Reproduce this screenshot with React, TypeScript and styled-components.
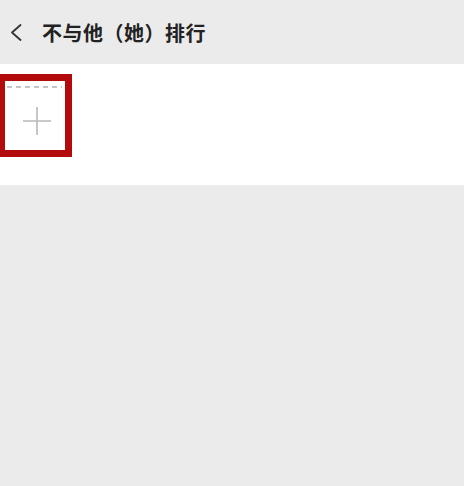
import React from "react";
import styled, { createGlobalStyle } from "styled-components";

const Global = createGlobalStyle`
  html, body { margin: 0; padding: 0; background: #ebebeb; }
  body { font-family: "Noto Sans CJK SC", "Noto Sans", sans-serif; }
`;

const Page = styled.div`
  width: 464px;
  min-height: 486px;
  background: #ebebeb;
  display: flex;
  flex-direction: column;
`;

const Header = styled.header`
  height: 64px;
  display: flex;
  align-items: center;
  padding-left: 9px;
  box-sizing: border-box;
`;

const BackButton = styled.button`
  border: none;
  background: none;
  padding: 0;
  width: 13px;
  height: 18px;
  display: flex;
  align-items: center;
  justify-content: center;
  margin-right: 20px;
  margin-top: 1px;
  cursor: pointer;
`;

const Title = styled.h1`
  margin: 0;
  font-size: 20px;
  line-height: 24px;
  font-weight: 700;
  color: #222;
  letter-spacing: 0.5px;
  font-family: "Noto Sans CJK SC", sans-serif;
  margin-top: 2px;
`;

const Section = styled.section`
  background: #ffffff;
  height: 121px;
  padding-top: 10px;
  box-sizing: border-box;
`;

const Tile = styled.div`
  width: 72px;
  height: 83px;
  box-sizing: border-box;
  border-style: solid;
  border-color: #b30b0b;
  border-width: 7px 7px 7px 5px;
  background: #fff;
  display: flex;
  flex-direction: column;
`;

const DashLine = styled.div`
  margin: 5px 3px 0 2px;
  height: 1.5px;
  background-image: linear-gradient(to right, #c4c4c4 0 5px, transparent 5px 9px);
  background-size: 9px 1.5px;
  background-repeat: repeat-x;
`;

const PlusArea = styled.div`
  flex: 1;
  display: flex;
  align-items: center;
  justify-content: center;
  padding: 5px 0 0 4px;
`;

export default function App() {
  return (
    <>
      <Global />
      <Page>
        <Header>
          <BackButton aria-label="返回">
            <svg width="12" height="17" viewBox="0 0 12 17">
              <path d="M10.5 1 L2 8.5 L10.5 16" fill="none" stroke="#333" strokeWidth="1.8" strokeLinecap="round" strokeLinejoin="round" />
            </svg>
          </BackButton>
          <Title>不与他（她）排行</Title>
        </Header>
        <Section>
          <Tile>
            <DashLine />
            <PlusArea>
              <svg width="28" height="28" viewBox="0 0 28 28">
                <path d="M14 0 V28 M0 14 H28" stroke="#b8b8b8" strokeWidth="1.6" />
              </svg>
            </PlusArea>
          </Tile>
        </Section>
      </Page>
    </>
  );
}
